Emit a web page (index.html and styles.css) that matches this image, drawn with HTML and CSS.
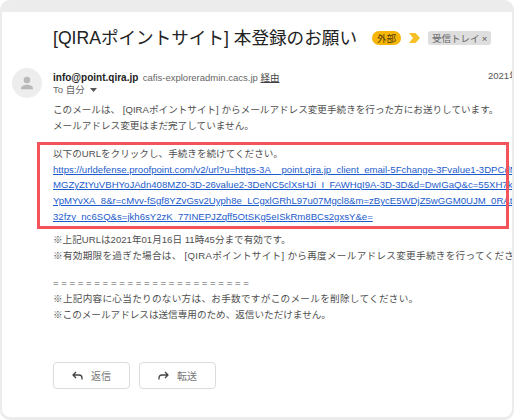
FILE: index.html
```html
<!DOCTYPE html>
<html lang="ja">
<head>
<meta charset="utf-8">
<title>[QIRAポイントサイト] 本登録のお願い</title>
<link rel="stylesheet" href="styles.css">
</head>
<body>
<div class="frame">
  <div class="panel">
    <div class="subject-row">
      <h1 class="subject">[QIRAポイントサイト] 本登録のお願い</h1>
      <span class="tag tag-ext">外部</span>
      <svg class="importance" width="11" height="10" viewBox="0 0 11 10"><polygon points="0,0 6.5,0 11,5 6.5,10 0,10 4,5" fill="#f6c026"/></svg>
      <span class="tag tag-inbox">受信トレイ <span class="tag-x">×</span></span>
    </div>

    <div class="sender-row">
      <div class="avatar">
        <svg width="30" height="30" viewBox="0 0 30 30">
          <circle cx="15" cy="12" r="3.3" fill="#b9b9b9"/>
          <path d="M9 20.5c0-2.6 3.4-3.8 6-3.8s6 1.2 6 3.8v0.8H9z" fill="#b9b9b9"/>
        </svg>
      </div>
      <div class="sender-info">
        <div class="from-line"><span class="name">info@point.qira.jp</span> <span class="via">cafis-exploreradmin.cacs.jp <span class="via-link">経由</span></span></div>
        <div class="to-line">To 自分 <svg class="caret" width="7" height="4" viewBox="0 0 7 4"><polygon points="0,0 7,0 3.5,4" fill="#555"/></svg></div>
      </div>
      <div class="date">2021年1月15日(金) 11:45</div>
    </div>

    <div class="message">
      <p class="para">このメールは、 [QIRAポイントサイト] からメールアドレス変更手続きを行った方にお送りしています。<br>メールアドレス変更はまだ完了していません。</p>
      <div class="highlight">
        <p class="para">以下のURLをクリックし、手続きを続けてください。<br><a class="link" href="#">https://urldefense.proofpoint.com/v2/url?u=https-3A__point.qira.jp_client_email-5Fchange-3Fvalue1-3DPCdNzQ<br>MGZyZtYuVBHYoJAdn408MZ0-3D-26value2-3DeNC5clXsHJi_I_FAWHqI9A-3D-3D&amp;d=DwIGaQ&amp;c=55XH7kQ9<br>YpMYvXA_8&amp;r=cMvv-fSgf8YZvGsv2Uyph8e_LCgxlGRhL97u07Mgcl8&amp;m=zBycE5WDjZ5wGGM0UJM_0RAtk<br>32fzy_nc6SQ&amp;s=jkh6sY2zK_77INEPJZqff5OtSKg5eISkRm8BCs2gxsY&amp;e=</a></p>
      </div>
      <p class="para para-note">※上記URLは2021年01月16日 11時45分まで有効です。<br><span class="wide">※有効期限を過ぎた場合は、 [QIRAポイントサイト] から再度メールアドレス変更手続きを行ってください。</span></p>
      <p class="para para-foot">= = = = = = = = = = = = = = = = = = = = = = = =<br><span class="wide">※上記内容に心当たりのない方は、お手数ですがこのメールを削除してください。</span><br>※このメールアドレスは送信専用のため、返信いただけません。</p>
    </div>

    <div class="actions">
      <button class="btn" type="button">
        <svg width="11" height="9" viewBox="0 0 11 9"><path d="M4 1 L1 4 L4 7 M1 4 H7 Q10 4 10 7 V8.5" fill="none" stroke="#444" stroke-width="1.3" stroke-linejoin="round"/></svg>
        <span>返信</span>
      </button>
      <button class="btn" type="button">
        <svg width="11" height="9" viewBox="0 0 11 9"><path d="M7 1 L10 4 L7 7 M10 4 H4 Q1 4 1 7 V8.5" fill="none" stroke="#444" stroke-width="1.3" stroke-linejoin="round"/></svg>
        <span>転送</span>
      </button>
    </div>
  </div>
</div>
</body>
</html>
```

FILE: styles.css
```css
html, body {
  margin: 0;
  padding: 0;
  background: #ffffff;
}

body {
  font-family: "Liberation Sans", "Noto Sans CJK JP", sans-serif;
}

.frame {
  width: 514px;
  height: 420px;
  box-sizing: border-box;
  background: #ececec;
  border-radius: 10px;
  padding: 12px 2px 3px 2px;
}

.panel {
  height: 100%;
  background: #ffffff;
  border-radius: 0 0 8px 8px;
  overflow: hidden;
}

/* subject */
.subject-row {
  display: flex;
  align-items: center;
  padding: 14px 0 0 51px;
  height: 24px;
}

.subject {
  margin: 0 15px 0 0;
  font-family: "Liberation Sans", "Noto Sans CJK JP", sans-serif;
  font-weight: normal;
  font-size: 17.6px;
  line-height: 24px;
  color: #222222;
  white-space: nowrap;
}

.tag {
  font-family: "Noto Sans CJK JP", sans-serif;
  font-size: 9.5px;
  line-height: 14px;
  height: 14px;
  white-space: nowrap;
}

.tag-ext {
  background: #f7b50a;
  color: #4a3600;
  border-radius: 7px;
  padding: 0 5px;
}

.importance {
  margin: 0 8px;
  flex-shrink: 0;
}

.tag-inbox {
  background: #dedede;
  color: #666666;
  border-radius: 3px;
  padding: 0 4px;
}

.tag-x {
  color: #555;
  font-family: "Liberation Sans", sans-serif;
}

/* sender */
.sender-row {
  display: flex;
  align-items: flex-start;
  margin-top: 18px;
  padding-left: 10px;
}

.avatar {
  width: 30px;
  height: 30px;
  border-radius: 50%;
  background: #ededed;
  flex-shrink: 0;
  margin-right: 11px;
}

.avatar svg {
  display: block;
}

.sender-info {
  flex: 1;
  min-width: 0;
}

.from-line,
.to-line {
  height: 14px;
  line-height: 14px;
  white-space: nowrap;
}

.from-line {
  margin-top: 1px;
}

.name {
  font-weight: bold;
  font-size: 10px;
  color: #222222;
}

.via {
  font-size: 9.5px;
  color: #666666;
}

.via-link {
  text-decoration: underline;
  color: #444;
}

.to-line {
  font-size: 9.5px;
  color: #666666;
}

.caret {
  margin-left: 3px;
  vertical-align: 1px;
}

.date {
  width: 24px;
  flex-shrink: 0;
  white-space: nowrap;
  font-size: 9.5px;
  line-height: 14px;
  margin-top: 1px;
  color: #555555;
}

/* body */
.message {
  margin-top: 4px;
  padding-left: 51px;
  white-space: nowrap;
  font-size: 9.6px;
  line-height: 15.6px;
  color: #4f4f4f;
}

.para {
  margin: 0;
}

.wide {
  letter-spacing: 0.3px;
}

.highlight {
  position: relative;
  margin-top: 13px;
}

.highlight::after {
  content: "";
  position: absolute;
  left: -16px;
  top: -4px;
  width: 472px;
  height: 87px;
  box-sizing: border-box;
  border: 3px solid #f3545b;
  pointer-events: none;
}

.link {
  color: #1b5ccc;
  text-decoration: underline;
}

.para-note {
  margin-top: 8px;
}

.para-foot {
  margin-top: 12px;
}

/* actions */
.actions {
  display: flex;
  gap: 9px;
  margin-top: 40px;
  padding-left: 51px;
}

.btn {
  width: 77px;
  height: 27px;
  box-sizing: border-box;
  border: 1px solid #dcdcdc;
  border-radius: 4px;
  background: #ffffff;
  display: flex;
  align-items: center;
  justify-content: center;
  gap: 8px;
  padding: 0;
  font-family: "Noto Sans CJK JP", sans-serif;
  font-size: 10px;
  color: #777777;
}

.btn svg {
  display: block;
}
```
